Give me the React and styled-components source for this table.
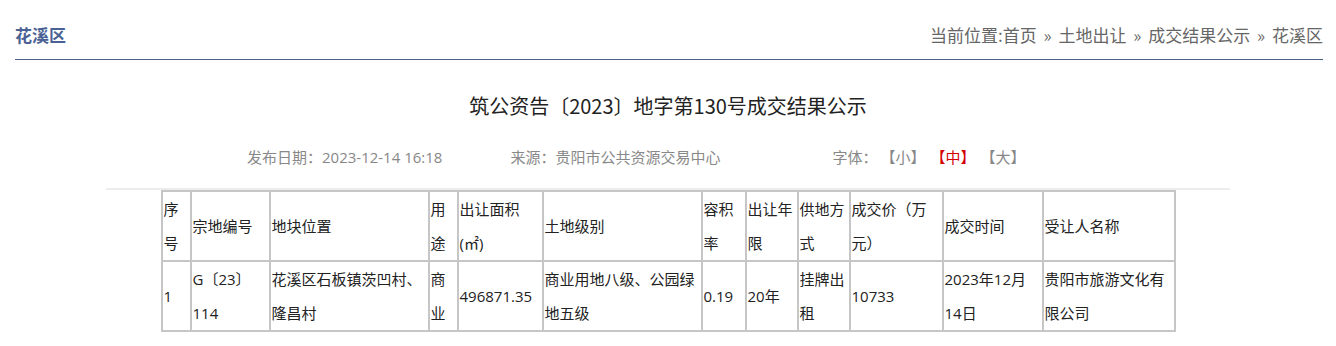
import React from "react";
import styled, { createGlobalStyle } from "styled-components";

const GlobalStyle = createGlobalStyle`
  body {
    margin: 0;
    background: #fff;
    font-family: "Noto Sans CJK SC", "Noto Sans", sans-serif;
    text-spacing-trim: space-all;
  }
`;

const Header = styled.div`
  margin: 0 13px 0 15px;
  height: 60px;
  padding-top: 10px;
  box-sizing: border-box;
  display: flex;
  align-items: center;
  justify-content: space-between;
  border-bottom: 1px solid #4b6089;
`;

const Area = styled.div`
  color: #4a6194;
  font-size: 17px;
  font-weight: 700;
`;

const Crumbs = styled.div`
  color: #666;
  font-size: 17px;
  word-spacing: 3px;
`;

const Article = styled.div`
  width: 1124px;
  margin: 0 auto;
`;

const Title = styled.h1`
  margin: 31px 0 0;
  font-size: 20px;
  line-height: 30px;
  font-weight: 400;
  color: #222;
  text-align: center;
`;

const Meta = styled.div`
  margin-top: 24px;
  padding-left: 141px;
  display: flex;
  align-items: center;
  font-family: "Open Sans", "Noto Sans CJK SC", sans-serif;
  font-size: 15px;
  line-height: 24px;
  color: #888;
  padding-bottom: 19px;
  border-bottom: 2px solid #ececec;
`;

const MetaItem = styled.span`
  margin-right: ${(p) => p.$gap || 0}px;
`;

const Size = styled.span`
  color: ${(p) => (p.$active ? "#d40000" : "#888")};
  margin-left: ${(p) => (p.$first ? 3 : 5)}px;
  cursor: pointer;
`;

const Table = styled.table`
  margin: 0 auto;
  border-collapse: collapse;
  table-layout: fixed;
  width: 1013px;
`;

const Cell = styled.td`
  border: 2px solid #c6c6c6;
  padding: 0 0 0 1px;
  font-family: "Open Sans", "Noto Sans CJK SC", sans-serif;
  font-size: 15px;
  line-height: 34px;
  color: #222;
  vertical-align: middle;
  text-align: left;
`;

const widths = [29, 79, 159, 29, 85, 159, 44, 52, 52, 93, 100, 132];

const heads = [
  "序号",
  "宗地编号",
  "地块位置",
  "用途",
  "出让面积(㎡)",
  "土地级别",
  "容积率",
  "出让年限",
  "供地方式",
  "成交价（万元）",
  "成交时间",
  "受让人名称",
];

const rows = [
  [
    "1",
    "G〔23〕114",
    "花溪区石板镇茨凹村、隆昌村",
    "商业",
    "496871.35",
    "商业用地八级、公园绿地五级",
    "0.19",
    "20年",
    "挂牌出租",
    "10733",
    "2023年12月14日",
    "贵阳市旅游文化有限公司",
  ],
];

export default function App() {
  return (
    <>
      <GlobalStyle />
      <Header>
        <Area>花溪区</Area>
        <Crumbs>当前位置:首页 » 土地出让 » 成交结果公示 » 花溪区</Crumbs>
      </Header>
      <Article>
        <Title>筑公资告〔2023〕地字第130号成交结果公示</Title>
        <Meta>
          <MetaItem $gap={68}>发布日期：2023-12-14 16:18</MetaItem>
          <MetaItem $gap={112}>来源：贵阳市公共资源交易中心</MetaItem>
          <MetaItem>
            字体：
            <Size $first>【小】</Size>
            <Size $active>【中】</Size>
            <Size>【大】</Size>
          </MetaItem>
        </Meta>
        <Table>
          <colgroup>
            {widths.map((w, i) => (
              <col key={i} style={{ width: w }} />
            ))}
          </colgroup>
          <tbody>
            <tr>
              {heads.map((h) => (
                <Cell key={h}>{h}</Cell>
              ))}
            </tr>
            {rows.map((r, i) => (
              <tr key={i}>
                {r.map((c, j) => (
                  <Cell key={j}>{c}</Cell>
                ))}
              </tr>
            ))}
          </tbody>
        </Table>
      </Article>
    </>
  );
}
